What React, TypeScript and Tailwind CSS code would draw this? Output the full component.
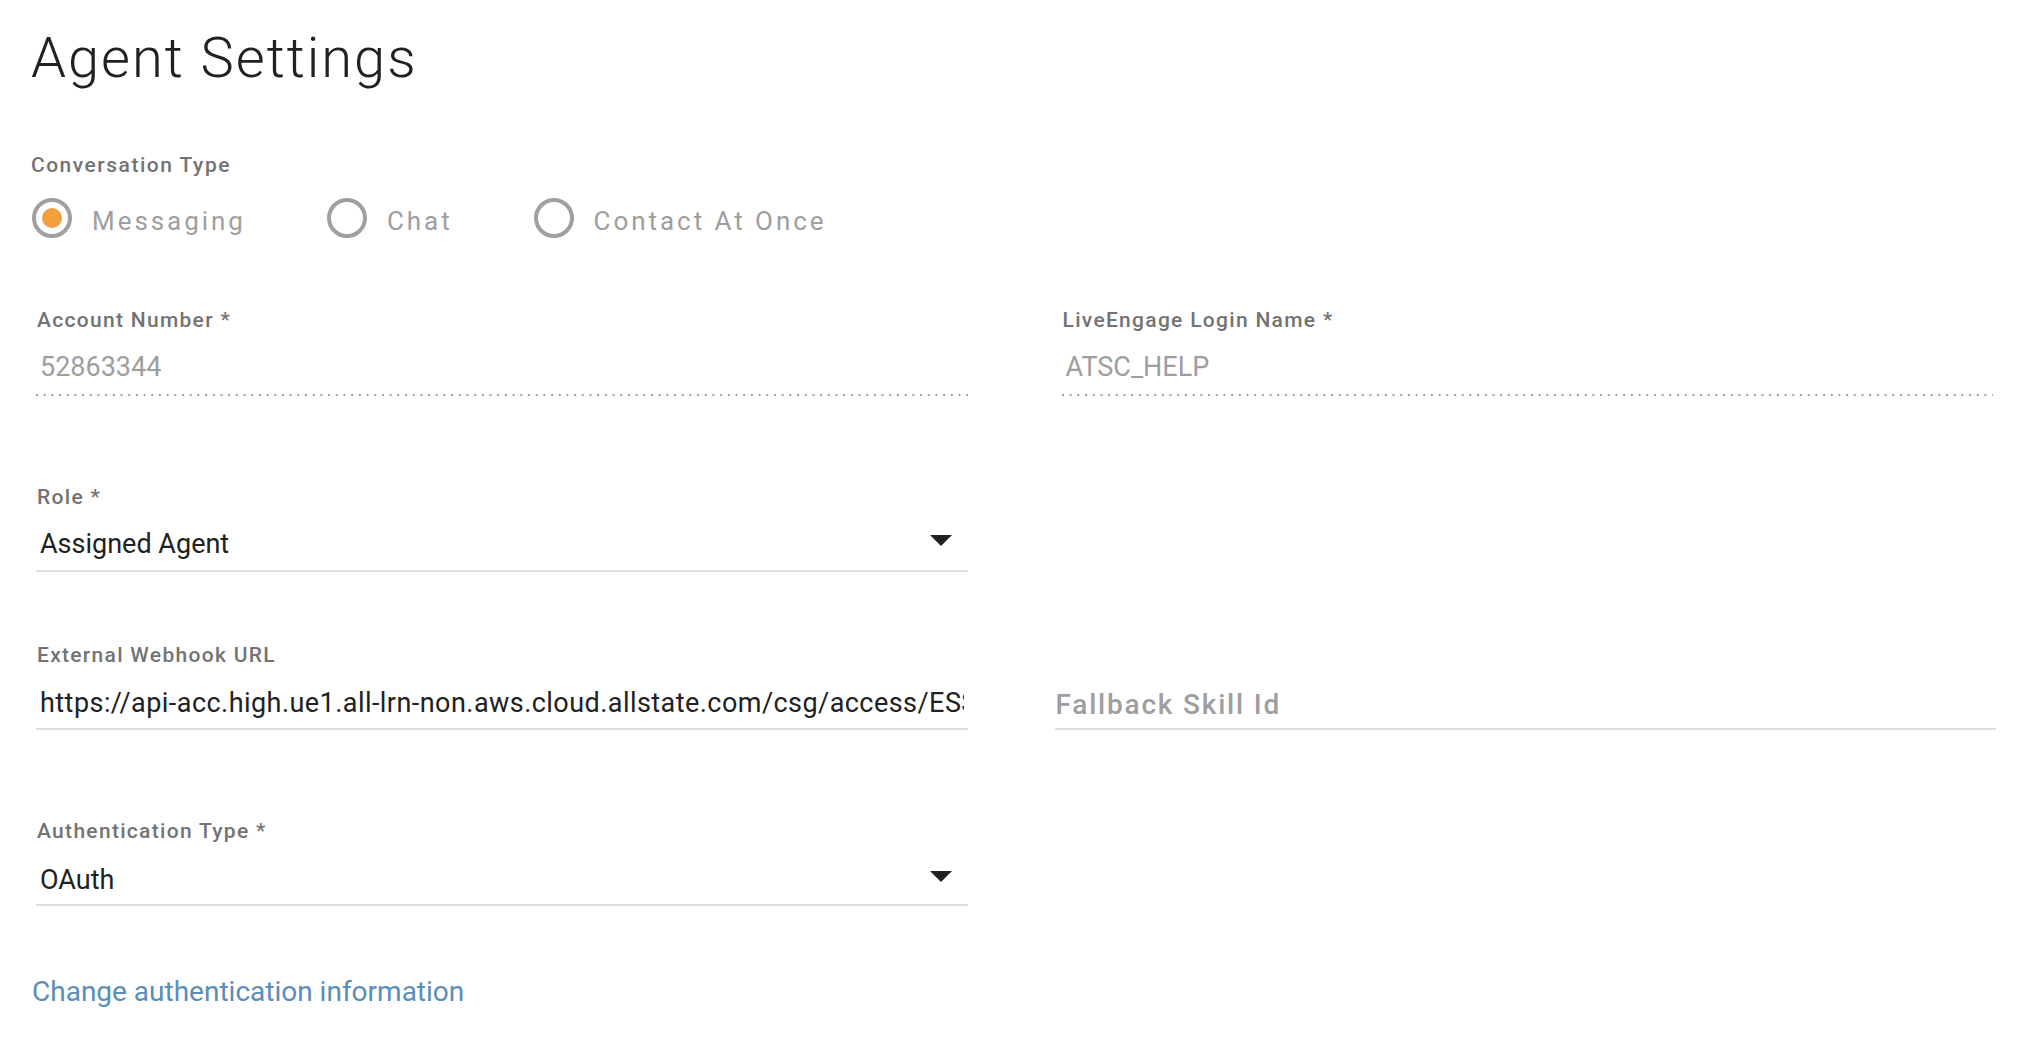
import React from 'react'

type FieldProps = {
  label?: string
  value: string
  kind: 'disabled' | 'select' | 'text' | 'placeholder'
  valueGap: string
  lineGap: string
  className?: string
}

function Caret() {
  return (
    <svg width="22" height="11" viewBox="0 0 22 11" className="mr-[16px] mb-[7px] shrink-0">
      <polygon points="0,0 22,0 11,11" fill="#212121" />
    </svg>
  )
}

function Field({ label, value, kind, valueGap, lineGap, className }: FieldProps) {
  return (
    <div className={className}>
      <div className="pl-[1px] h-[24px] text-[21px] leading-[24px] font-medium tracking-[1.3px] text-[#737373]">
        {label}
      </div>
      <div className={`${valueGap} flex items-center h-[32px]`}>
        {kind === 'placeholder' ? (
          <span className="pl-[1px] text-[28px] leading-[32px] font-medium tracking-[1.8px] text-[#9e9e9e]">
            {value}
          </span>
        ) : kind === 'disabled' ? (
          <span className="pl-[4px] text-[27px] leading-[32px] text-[#9e9e9e]">{value}</span>
        ) : (
          <span
            className={
              kind === 'text'
                ? 'pl-[4px] mr-[4px] flex-1 min-w-0 overflow-hidden whitespace-nowrap text-[27px] leading-[32px] tracking-[0.45px] text-[#212121]'
                : 'pl-[4px] flex-1 min-w-0 overflow-hidden whitespace-nowrap text-[27px] leading-[32px] text-[#212121]'
            }
          >
            {value}
          </span>
        )}
        {kind === 'select' && <Caret />}
      </div>
      {kind === 'disabled' ? (
        <div className={`${lineGap} h-[2px] bg-[linear-gradient(to_right,#9e9e9e_0,#9e9e9e_2px,transparent_2px)] [background-size:7.7px_2px] bg-repeat-x`} />
      ) : (
        <div className={`${lineGap} h-[2px] bg-[#e0e0e0]`} />
      )}
    </div>
  )
}

function Radio({ label, checked }: { label: string; checked?: boolean }) {
  return (
    <label className="flex items-start gap-[20px]">
      <span className="w-[40px] h-[40px] rounded-full border-[4px] border-[#a0a0a0] flex items-center justify-center">
        {checked && <span className="w-[20px] h-[20px] rounded-full bg-[#f2a03d]" />}
      </span>
      <span className="pt-[3px] text-[26px] leading-[40px] tracking-[2.95px] text-[#9e9e9e]">{label}</span>
    </label>
  )
}

export default function App() {
  return (
    <div className="min-h-screen w-full bg-white font-['Roboto',sans-serif] pt-[26px] pl-[31px] pr-[33px]">
      <h1 className="text-[56px] leading-[64px] font-light tracking-[2px] text-[#212121]">Agent Settings</h1>

      <div className="mt-[63px] h-[24px] text-[21px] leading-[24px] font-medium tracking-[1.5px] text-[#737373]">
        Conversation Type
      </div>
      <div className="mt-[21px] pl-[1px] flex gap-[81px]">
        <Radio label="Messaging" checked />
        <Radio label="Chat" />
        <Radio label="Contact At Once" />
      </div>

      <div className="pl-[5px] mt-[67px] grid grid-cols-2 gap-x-[94px]">
        <Field label="Account Number *" value="52863344" kind="disabled" valueGap="mt-[19px]" lineGap="mt-[11px]" />
        <Field label="LiveEngage Login Name *" value="ATSC_HELP" kind="disabled" valueGap="mt-[19px]" lineGap="mt-[11px]" />

        <Field className="mt-[89px]" label="Role *" value="Assigned Agent" kind="select" valueGap="mt-[19px]" lineGap="mt-[10px]" />
        <div />

        <Field
          className="mt-[71px]"
          label="External Webhook URL"
          value="https://api-acc.high.ue1.all-lrn-non.aws.cloud.allstate.com/csg/access/ESS/liveengage/webhook"
          kind="text"
          valueGap="mt-[20px]"
          lineGap="mt-[9px]"
        />
        <Field className="mt-[71px] -ml-[7px] -mr-[3px]" value="Fallback Skill Id" kind="placeholder" valueGap="mt-[22px]" lineGap="mt-[7px]" />

        <Field className="mt-[89px]" label="Authentication Type *" value="OAuth" kind="select" valueGap="mt-[21px]" lineGap="mt-[8px]" />
        <div />
      </div>

      <div className="mt-[70px] pl-[1px]">
        <a href="#" className="text-[28px] leading-[32px] text-[#5a8db8]">
          Change authentication information
        </a>
      </div>
    </div>
  )
}
